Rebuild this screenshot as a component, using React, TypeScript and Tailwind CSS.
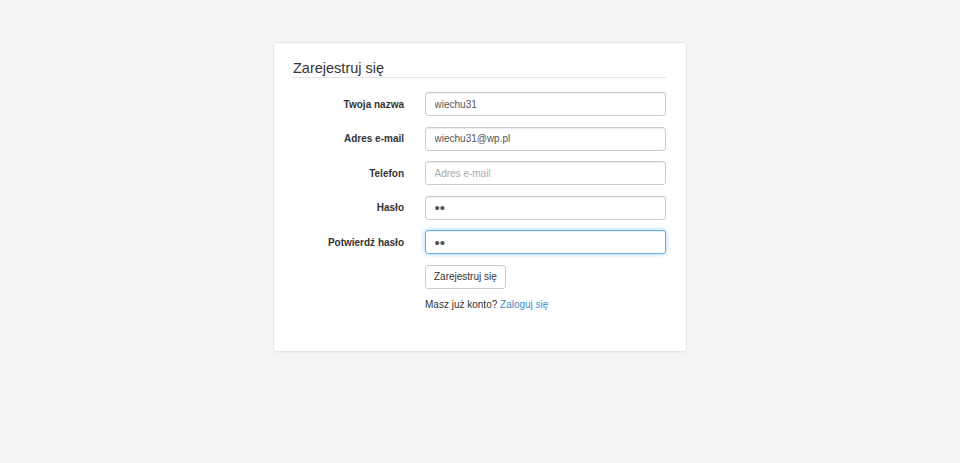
const fields = [
  { label: "Twoja nazwa", type: "text", value: "wiechu31" },
  { label: "Adres e-mail", type: "email", value: "wiechu31@wp.pl" },
  { label: "Telefon", type: "text", value: "", placeholder: "Adres e-mail" },
  { label: "Hasło", type: "password", value: "ab" },
  { label: "Potwierdź hasło", type: "password", value: "ab", focused: true },
];

export default function App() {
  return (
    <div className="min-h-[463px] bg-[#f4f4f4] pt-[42px] font-['Liberation_Sans',Arial,sans-serif] text-[#333]">
      <div className="mx-auto w-[414px] rounded-[3px] border border-[#e6e6e6] bg-white pb-[38.5px] pl-[19px] pr-[20px] pt-[16px] shadow-[0_1px_1px_rgba(0,0,0,0.03)]">
        <h3 className="border-b border-[#e5e5e5] text-[14.5px] leading-[18px] text-[#333]">
          Zarejestruj się
        </h3>

        <form className="mt-[14px]">
          {fields.map((f) => (
            <div
              key={f.label}
              className="mb-[10.5px] grid grid-cols-[111px_241px] items-center gap-x-[21px]"
            >
              <label className="text-right text-[10px] font-bold text-[#333]">
                {f.label}
              </label>
              <input
                type={f.type}
                value={f.value}
                placeholder={f.placeholder}
                readOnly
                className={
                  f.focused
                    ? "h-[24px] w-full rounded-[3px] border border-[#66afe9] bg-white px-[8.5px] text-[15px] text-[#555] shadow-[inset_0_1px_1px_rgba(0,0,0,0.075),0_0_5px_rgba(102,175,233,0.6)] outline-none"
                    : f.type === "password"
                      ? "h-[24px] w-full rounded-[3px] border border-[#ccc] bg-white px-[8.5px] text-[15px] text-[#555] shadow-[inset_0_1px_1px_rgba(0,0,0,0.075)] outline-none"
                      : "h-[24px] w-full rounded-[3px] border border-[#ccc] bg-white px-[8.5px] text-[10px] text-[#555] shadow-[inset_0_1px_1px_rgba(0,0,0,0.075)] outline-none placeholder:text-[#aaa]"
                }
              />
            </div>
          ))}

          <div className="grid grid-cols-[111px_241px] gap-x-[21px]">
            <div />
            <div>
              <button
                type="button"
                className="block h-[24px] rounded-[3px] border border-[#ccc] bg-white px-[8px] text-[10px] leading-none text-[#333]"
              >
                Zarejestruj się
              </button>
              <p className="mt-[9.5px] text-[10px] leading-[14px] text-[#333]">
                Masz już konto?{" "}
                <a href="#" className="text-[#428bca]">
                  Zaloguj się
                </a>
              </p>
            </div>
          </div>
        </form>
      </div>
    </div>
  );
}
